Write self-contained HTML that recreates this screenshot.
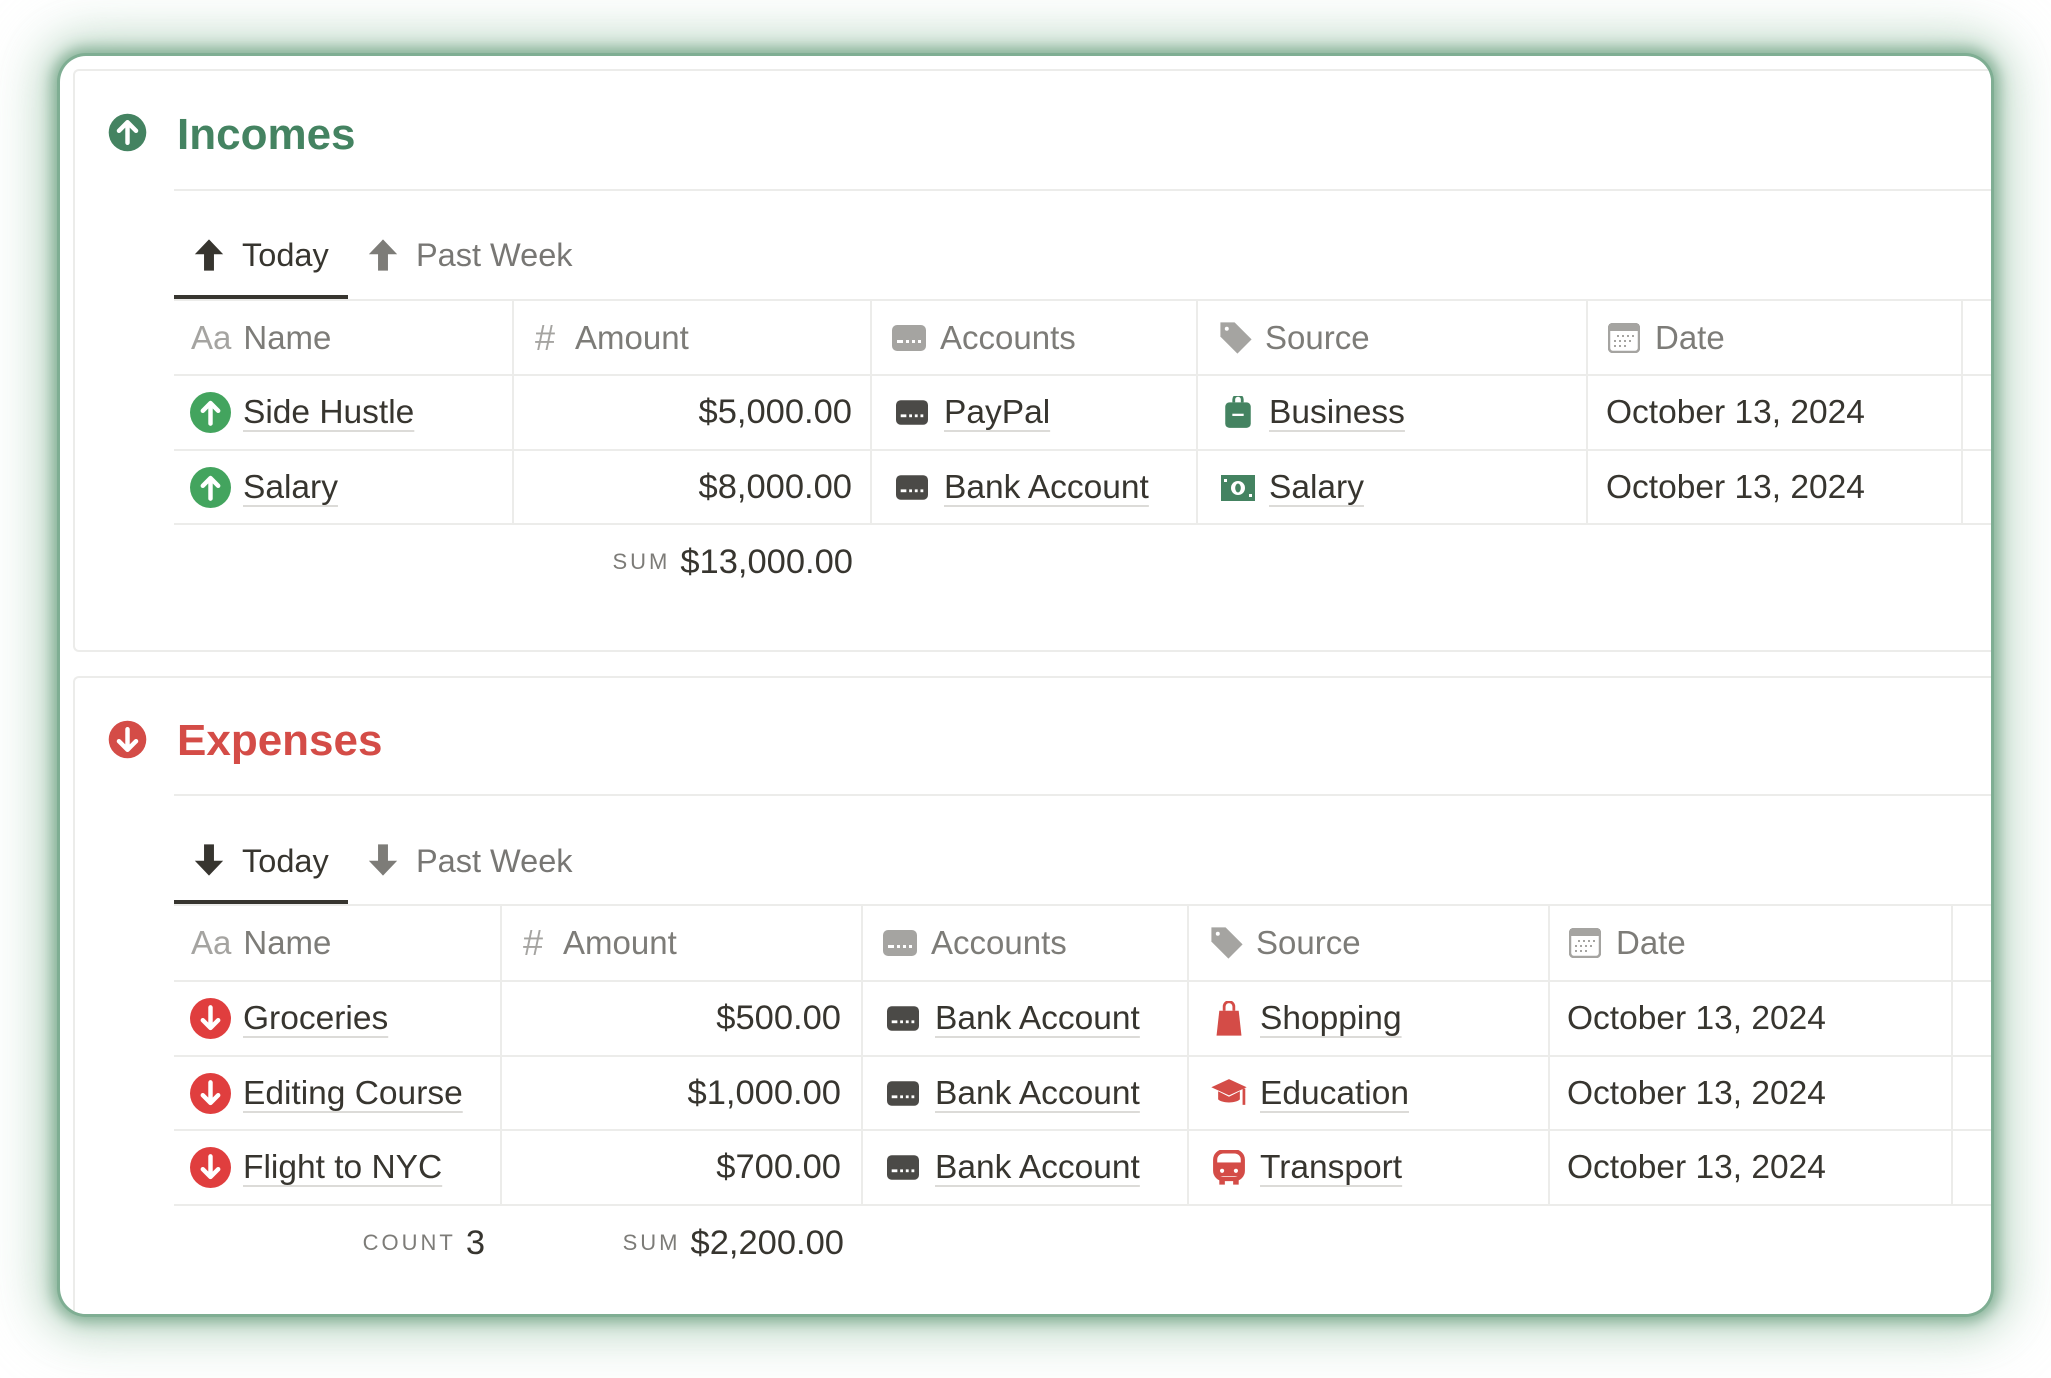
<!DOCTYPE html>
<html><head><meta charset="utf-8">
<style>
*{margin:0;padding:0;box-sizing:border-box}
body{width:2051px;height:1378px;background:#fff;position:relative;overflow:hidden;font-family:"Liberation Sans",sans-serif;color:#37352f}
.card{position:absolute;left:60px;top:56px;width:1931px;height:1258px;border-radius:26px;background:#fff;overflow:hidden;
box-shadow:0 0 0 3px #7fae93,0 0 14px 8px rgba(110,160,130,.75),0 0 40px 18px rgba(140,185,155,.45),0 0 70px 26px rgba(200,225,210,.35)}
.panel{position:absolute;border:2px solid #ececea;border-right:none;border-radius:6px 0 0 6px;background:#fff}
.a{position:absolute;white-space:nowrap}
.row{position:absolute;display:flex;align-items:center;white-space:nowrap;font-size:33.5px}
.num{font-size:34.5px}
.hl{position:absolute;height:2px;background:#ececea}
.vl{position:absolute;width:2px;background:#ececea}
.u{text-decoration:underline;text-decoration-color:#dcdbd8;text-decoration-thickness:2px;text-underline-offset:7px}
.hd{color:#7d7c78;font-size:33px}
.ttl{font-size:44px;font-weight:bold}
.tab{font-size:32.5px}
.lbl{font-size:22px;letter-spacing:3px;color:#7d7c78;margin-right:10px}
svg{display:block}
</style></head><body>
<div class="card">
<div class="panel" style="left:13px;top:13px;height:583px;width:1918px"></div>
<div class="panel" style="left:13px;top:620px;height:700px;width:1918px"></div>
</div>

<!-- INCOMES -->
<svg class="a" style="left:107px;top:112px" width="41" height="41" viewBox="0 0 24 24"><circle cx="12" cy="12" r="11" fill="#448361"/><path d="M12 18V6.5M7 11l5-5 5 5" stroke="#fff" stroke-width="2.6" fill="none" stroke-linecap="round" stroke-linejoin="round"/></svg>
<div class="a ttl" style="left:177px;top:110px;color:#448361">Incomes</div>
<div class="hl" style="left:174px;top:189px;width:1817px"></div>
<svg class="a" style="left:192px;top:238px" width="34" height="34" viewBox="0 0 24 24"><path d="M12 1L22 11.5H15.5V23H8.5V11.5H2Z" fill="#37352f"/></svg>
<div class="a tab" style="left:242px;top:237px">Today</div>
<svg class="a" style="left:366px;top:238px" width="34" height="34" viewBox="0 0 24 24"><path d="M12 1L22 11.5H15.5V23H8.5V11.5H2Z" fill="#7d7c78"/></svg>
<div class="a tab" style="left:416px;top:237px;color:#787774">Past Week</div>
<div class="a" style="left:174px;top:295px;width:174px;height:4px;background:#37352f"></div>
<div class="hl" style="left:174px;top:299px;width:1817px"></div>
<div class="hl" style="left:174px;top:374px;width:1817px"></div>
<div class="hl" style="left:174px;top:449px;width:1817px"></div>
<div class="hl" style="left:174px;top:523px;width:1817px"></div>
<div class="vl" style="left:512px;top:301px;height:222px"></div>
<div class="vl" style="left:870px;top:301px;height:222px"></div>
<div class="vl" style="left:1196px;top:301px;height:222px"></div>
<div class="vl" style="left:1586px;top:301px;height:222px"></div>
<div class="vl" style="left:1961px;top:301px;height:222px"></div>

<div class="row hd" style="left:191px;top:301px;height:73px"><span style="color:#a5a4a1;margin-right:12px">Aa</span>Name</div>
<div class="row hd" style="left:535px;top:301px;height:73px"><span style="color:#a5a4a1;font-size:36px;margin-right:20px">#</span>Amount</div>
<div class="row hd" style="left:892px;top:301px;height:73px"><svg width="34" height="26" viewBox="0 0 34 26" style="margin-right:14px"><rect width="34" height="26" rx="5" fill="#a5a4a1"/><rect x="5" y="15" width="6" height="3" fill="#fff"/><rect x="14" y="15" width="3" height="3" fill="#fff"/><rect x="20" y="15" width="3" height="3" fill="#fff"/><rect x="26" y="15" width="3" height="3" fill="#fff"/></svg>Accounts</div>
<div class="row hd" style="left:1219px;top:301px;height:73px"><svg width="34" height="34" viewBox="0 0 24 24" style="margin-right:12px"><path d="M1 1h10l12 12-10 10L1 11Z" fill="#a5a4a1"/><circle cx="5.5" cy="5.5" r="1.4" fill="#fff"/></svg>Source</div>
<div class="row hd" style="left:1608px;top:301px;height:73px"><svg width="32" height="30" viewBox="0 0 32 30" style="margin-right:15px"><rect x="1" y="1" width="30" height="28" rx="4" fill="none" stroke="#a5a4a1" stroke-width="2.5"/><rect x="1" y="1" width="30" height="7" fill="#a5a4a1"/><g fill="#a5a4a1"><rect x="9" y="12" width="2" height="2"/><rect x="14" y="12" width="2" height="2"/><rect x="19" y="12" width="2" height="2"/><rect x="24" y="12" width="2" height="2"/><rect x="6" y="17" width="2" height="2"/><rect x="11" y="17" width="2" height="2"/><rect x="16" y="17" width="2" height="2"/><rect x="21" y="17" width="2" height="2"/><rect x="6" y="22" width="2" height="2"/><rect x="11" y="22" width="2" height="2"/><rect x="16" y="22" width="2" height="2"/></g></svg>Date</div>

<div class="row" style="left:190px;top:376px;height:73px"><svg width="41" height="41" viewBox="0 0 24 24" style="margin-right:12px"><circle cx="12" cy="12" r="12" fill="#43a45e"/><path d="M12 18.5V6.5M7.5 11l4.5-4.5 4.5 4.5" stroke="#fff" stroke-width="2.6" fill="none" stroke-linecap="round" stroke-linejoin="round"/></svg><span class="u">Side Hustle</span></div>
<div class="row" style="left:190px;top:451px;height:73px"><svg width="41" height="41" viewBox="0 0 24 24" style="margin-right:12px"><circle cx="12" cy="12" r="12" fill="#43a45e"/><path d="M12 18.5V6.5M7.5 11l4.5-4.5 4.5 4.5" stroke="#fff" stroke-width="2.6" fill="none" stroke-linecap="round" stroke-linejoin="round"/></svg><span class="u">Salary</span></div>
<div class="row num" style="left:514px;width:338px;justify-content:flex-end;top:376px;height:73px">$5,000.00</div>
<div class="row num" style="left:514px;width:338px;justify-content:flex-end;top:451px;height:73px">$8,000.00</div>
<div class="row" style="left:896px;top:376px;height:73px"><svg width="32" height="25" viewBox="0 0 34 26" style="margin-right:16px"><rect width="34" height="26" rx="5" fill="#4b4a47"/><rect x="5" y="15" width="6" height="3" fill="#fff"/><rect x="14" y="15" width="3" height="3" fill="#fff"/><rect x="20" y="15" width="3" height="3" fill="#fff"/><rect x="26" y="15" width="3" height="3" fill="#fff"/></svg><span class="u">PayPal</span></div>
<div class="row" style="left:896px;top:451px;height:73px"><svg width="32" height="25" viewBox="0 0 34 26" style="margin-right:16px"><rect width="34" height="26" rx="5" fill="#4b4a47"/><rect x="5" y="15" width="6" height="3" fill="#fff"/><rect x="14" y="15" width="3" height="3" fill="#fff"/><rect x="20" y="15" width="3" height="3" fill="#fff"/><rect x="26" y="15" width="3" height="3" fill="#fff"/></svg><span class="u">Bank Account</span></div>
<div class="row" style="left:1221px;top:376px;height:73px"><svg width="34" height="34" viewBox="0 0 24 24" style="margin-right:14px"><path d="M9 4.5V2.5a3 3 0 0 1 6 0v2" stroke="#448361" stroke-width="2" fill="none"/><rect x="3" y="4.5" width="18" height="18" rx="3" fill="#448361"/><rect x="8" y="12.5" width="8" height="1.6" fill="#fff"/></svg><span class="u">Business</span></div>
<div class="row" style="left:1221px;top:451px;height:73px"><svg width="34" height="26" viewBox="0 0 34 26" style="margin-right:14px"><rect width="34" height="26" fill="#448361"/><path d="M10 13a7 7 0 0 0 7 7h0a7 7 0 0 0 7-7 7 7 0 0 0-7-7 7 7 0 0 0-7 7z" fill="#fff"/><ellipse cx="17" cy="13" rx="2.8" ry="4.5" fill="#448361"/><rect x="3" y="4" width="3" height="3" fill="#fff"/><rect x="28" y="19" width="3" height="3" fill="#fff"/></svg><span class="u">Salary</span></div>
<div class="row" style="left:1606px;top:376px;height:73px">October 13, 2024</div>
<div class="row" style="left:1606px;top:451px;height:73px">October 13, 2024</div>
<div class="row num" style="left:514px;width:339px;justify-content:flex-end;top:535px;height:54px"><span class="lbl">SUM</span>$13,000.00</div>

<!-- EXPENSES -->
<svg class="a" style="left:107px;top:719px" width="41" height="41" viewBox="0 0 24 24"><circle cx="12" cy="12" r="11" fill="#d44c47"/><path d="M12 6v11.5M7 13l5 5 5-5" stroke="#fff" stroke-width="2.6" fill="none" stroke-linecap="round" stroke-linejoin="round"/></svg>
<div class="a ttl" style="left:177px;top:716px;color:#d44c47">Expenses</div>
<div class="hl" style="left:174px;top:794px;width:1817px"></div>
<svg class="a" style="left:192px;top:843px" width="34" height="34" viewBox="0 0 24 24"><path d="M12 23L22 12.5H15.5V1H8.5V12.5H2Z" fill="#37352f"/></svg>
<div class="a tab" style="left:242px;top:843px">Today</div>
<svg class="a" style="left:366px;top:843px" width="34" height="34" viewBox="0 0 24 24"><path d="M12 23L22 12.5H15.5V1H8.5V12.5H2Z" fill="#7d7c78"/></svg>
<div class="a tab" style="left:416px;top:843px;color:#787774">Past Week</div>
<div class="a" style="left:174px;top:900px;width:174px;height:4px;background:#37352f"></div>
<div class="hl" style="left:174px;top:904px;width:1817px"></div>
<div class="hl" style="left:174px;top:980px;width:1817px"></div>
<div class="hl" style="left:174px;top:1055px;width:1817px"></div>
<div class="hl" style="left:174px;top:1129px;width:1817px"></div>
<div class="hl" style="left:174px;top:1204px;width:1817px"></div>
<div class="vl" style="left:500px;top:906px;height:298px"></div>
<div class="vl" style="left:861px;top:906px;height:298px"></div>
<div class="vl" style="left:1187px;top:906px;height:298px"></div>
<div class="vl" style="left:1548px;top:906px;height:298px"></div>
<div class="vl" style="left:1951px;top:906px;height:298px"></div>

<div class="row hd" style="left:191px;top:906px;height:74px"><span style="color:#a5a4a1;margin-right:12px">Aa</span>Name</div>
<div class="row hd" style="left:523px;top:906px;height:74px"><span style="color:#a5a4a1;font-size:36px;margin-right:20px">#</span>Amount</div>
<div class="row hd" style="left:883px;top:906px;height:74px"><svg width="34" height="26" viewBox="0 0 34 26" style="margin-right:14px"><rect width="34" height="26" rx="5" fill="#a5a4a1"/><rect x="5" y="15" width="6" height="3" fill="#fff"/><rect x="14" y="15" width="3" height="3" fill="#fff"/><rect x="20" y="15" width="3" height="3" fill="#fff"/><rect x="26" y="15" width="3" height="3" fill="#fff"/></svg>Accounts</div>
<div class="row hd" style="left:1210px;top:906px;height:74px"><svg width="34" height="34" viewBox="0 0 24 24" style="margin-right:12px"><path d="M1 1h10l12 12-10 10L1 11Z" fill="#a5a4a1"/><circle cx="5.5" cy="5.5" r="1.4" fill="#fff"/></svg>Source</div>
<div class="row hd" style="left:1569px;top:906px;height:74px"><svg width="32" height="30" viewBox="0 0 32 30" style="margin-right:15px"><rect x="1" y="1" width="30" height="28" rx="4" fill="none" stroke="#a5a4a1" stroke-width="2.5"/><rect x="1" y="1" width="30" height="7" fill="#a5a4a1"/><g fill="#a5a4a1"><rect x="9" y="12" width="2" height="2"/><rect x="14" y="12" width="2" height="2"/><rect x="19" y="12" width="2" height="2"/><rect x="24" y="12" width="2" height="2"/><rect x="6" y="17" width="2" height="2"/><rect x="11" y="17" width="2" height="2"/><rect x="16" y="17" width="2" height="2"/><rect x="21" y="17" width="2" height="2"/><rect x="6" y="22" width="2" height="2"/><rect x="11" y="22" width="2" height="2"/><rect x="16" y="22" width="2" height="2"/></g></svg>Date</div>

<div class="row" style="left:190px;top:982px;height:73px"><svg width="41" height="41" viewBox="0 0 24 24" style="margin-right:12px"><circle cx="12" cy="12" r="12" fill="#e03e3e"/><path d="M12 5.5v12M7.5 13l4.5 4.5 4.5-4.5" stroke="#fff" stroke-width="2.6" fill="none" stroke-linecap="round" stroke-linejoin="round"/></svg><span class="u">Groceries</span></div>
<div class="row" style="left:190px;top:1057px;height:73px"><svg width="41" height="41" viewBox="0 0 24 24" style="margin-right:12px"><circle cx="12" cy="12" r="12" fill="#e03e3e"/><path d="M12 5.5v12M7.5 13l4.5 4.5 4.5-4.5" stroke="#fff" stroke-width="2.6" fill="none" stroke-linecap="round" stroke-linejoin="round"/></svg><span class="u">Editing Course</span></div>
<div class="row" style="left:190px;top:1131px;height:73px"><svg width="41" height="41" viewBox="0 0 24 24" style="margin-right:12px"><circle cx="12" cy="12" r="12" fill="#e03e3e"/><path d="M12 5.5v12M7.5 13l4.5 4.5 4.5-4.5" stroke="#fff" stroke-width="2.6" fill="none" stroke-linecap="round" stroke-linejoin="round"/></svg><span class="u">Flight to NYC</span></div>
<div class="row num" style="left:502px;width:339px;justify-content:flex-end;top:982px;height:73px">$500.00</div>
<div class="row num" style="left:502px;width:339px;justify-content:flex-end;top:1057px;height:73px">$1,000.00</div>
<div class="row num" style="left:502px;width:339px;justify-content:flex-end;top:1131px;height:73px">$700.00</div>
<div class="row" style="left:887px;top:982px;height:73px"><svg width="32" height="25" viewBox="0 0 34 26" style="margin-right:16px"><rect width="34" height="26" rx="5" fill="#4b4a47"/><rect x="5" y="15" width="6" height="3" fill="#fff"/><rect x="14" y="15" width="3" height="3" fill="#fff"/><rect x="20" y="15" width="3" height="3" fill="#fff"/><rect x="26" y="15" width="3" height="3" fill="#fff"/></svg><span class="u">Bank Account</span></div>
<div class="row" style="left:887px;top:1057px;height:73px"><svg width="32" height="25" viewBox="0 0 34 26" style="margin-right:16px"><rect width="34" height="26" rx="5" fill="#4b4a47"/><rect x="5" y="15" width="6" height="3" fill="#fff"/><rect x="14" y="15" width="3" height="3" fill="#fff"/><rect x="20" y="15" width="3" height="3" fill="#fff"/><rect x="26" y="15" width="3" height="3" fill="#fff"/></svg><span class="u">Bank Account</span></div>
<div class="row" style="left:887px;top:1131px;height:73px"><svg width="32" height="25" viewBox="0 0 34 26" style="margin-right:16px"><rect width="34" height="26" rx="5" fill="#4b4a47"/><rect x="5" y="15" width="6" height="3" fill="#fff"/><rect x="14" y="15" width="3" height="3" fill="#fff"/><rect x="20" y="15" width="3" height="3" fill="#fff"/><rect x="26" y="15" width="3" height="3" fill="#fff"/></svg><span class="u">Bank Account</span></div>
<div class="row" style="left:1212px;top:982px;height:73px"><svg width="34" height="36" viewBox="0 0 24 26" style="margin-right:14px"><path d="M8.5 7V4a3.5 3.5 0 0 1 7 0v3" stroke="#d44c47" stroke-width="2" fill="none"/><path d="M5 7h14l2 18H3Z" fill="#d44c47"/></svg><span class="u">Shopping</span></div>
<div class="row" style="left:1210px;top:1057px;height:73px"><svg width="38" height="34" viewBox="0 0 28 24" style="margin-right:12px"><path d="M14 1L27 7 14 13 1 7Z" fill="#d44c47"/><path d="M6 10v6c3 3 13 3 16 0v-6l-8 4Z" fill="#d44c47"/><path d="M25 8v12" stroke="#d44c47" stroke-width="2"/></svg><span class="u">Education</span></div>
<div class="row" style="left:1212px;top:1131px;height:73px"><svg width="34" height="36" viewBox="0 0 24 26" style="margin-right:14px"><rect x="2" y="1" width="20" height="20" rx="6" fill="none" stroke="#d44c47" stroke-width="3"/><rect x="3" y="9" width="18" height="10" fill="#d44c47"/><rect x="5" y="20" width="4" height="5" fill="#d44c47"/><rect x="15" y="20" width="4" height="5" fill="#d44c47"/><circle cx="7" cy="15" r="1.5" fill="#fff"/><circle cx="17" cy="15" r="1.5" fill="#fff"/></svg><span class="u">Transport</span></div>
<div class="row" style="left:1567px;top:982px;height:73px">October 13, 2024</div>
<div class="row" style="left:1567px;top:1057px;height:73px">October 13, 2024</div>
<div class="row" style="left:1567px;top:1131px;height:73px">October 13, 2024</div>
<div class="row num" style="left:174px;width:311px;justify-content:flex-end;top:1216px;height:54px"><span class="lbl">COUNT</span>3</div>
<div class="row num" style="left:502px;width:342px;justify-content:flex-end;top:1216px;height:54px"><span class="lbl">SUM</span>$2,200.00</div>
</body></html>
